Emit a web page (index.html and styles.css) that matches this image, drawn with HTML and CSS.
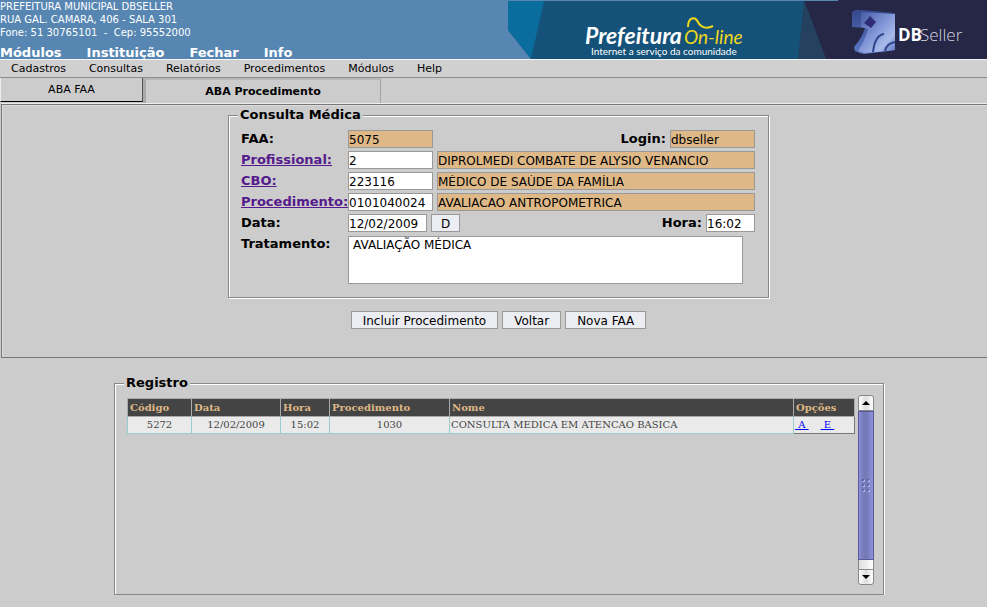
FILE: index.html
```html
<!DOCTYPE html>
<html lang="pt-BR">
<head>
<meta charset="utf-8">
<title>DBSeller - Prefeitura On-line</title>
<link rel="stylesheet" href="styles.css">
</head>
<body>
<header class="top">
  <div class="top-info">
    <p class="address">PREFEITURA MUNICIPAL DBSELLER<br>RUA GAL. CAMARA, 406 - SALA 301<br>Fone: 51 30765101 &nbsp;- &nbsp;Cep: 95552000</p>
    <nav class="main-nav">
      <a href="#">Módulos</a><a href="#">Instituição</a><a href="#">Fechar</a><a href="#">Info</a>
    </nav>
  </div>
  <svg class="banner" width="479" height="59" viewBox="0 0 479 59">
    <defs>
      <linearGradient id="cube" x1="0" y1="0" x2="1" y2="1">
        <stop offset="0" stop-color="#4257a4"/><stop offset=".5" stop-color="#8398d8"/><stop offset=".75" stop-color="#a9bbea"/><stop offset="1" stop-color="#5670bd"/>
      </linearGradient>
      <linearGradient id="side" x1="0" y1="0" x2="0" y2="1">
        <stop offset="0" stop-color="#35498c"/><stop offset="1" stop-color="#5b78c6"/>
      </linearGradient>
    </defs>
    <path d="M0 1H479V59H23L0 30Z" fill="#14527a"/>
    <path d="M0 1H36L23 59L0 30Z" fill="#0b6d9e"/>
    <path d="M296 1H330V0H479V59H318Z" fill="#262646"/>
    <path d="M296 1L318 59H290Z" fill="#25415f"/>
    <text class="brand" x="77" y="44">Prefeitura</text>
    <text class="online" x="176" y="44">On-line</text>
    <path d="M180 27C180 17 187 16 190 22C193 28 199 29 205 26" fill="none" stroke="#f0d81c" stroke-width="2"/>
    <text class="slogan" x="83" y="55">Internet a serviço da comunidade</text>
    <path d="M344 13Q344 11 348 10L354 10L387 13V50L380 51L356 54Q351 53 347 51L346 47Q354 38 357 28L344 27Z" fill="url(#side)"/>
    <path d="M353 12L387 14V50L380 51L356 53L350 51Q357 40 360 29L353 27Z" fill="url(#cube)"/>
    <path d="M362 16L368 22L363 28L356 23Z" fill="#302d78"/>
    <path d="M376 34C369 35 366 43 365 52M387 42C381 43 378 46 377 51" fill="none" stroke="#30448d" stroke-width="2"/>
    <text class="seller-bold" x="390" y="41">DB</text>
    <text class="seller" x="412" y="41">Seller</text>
  </svg>
</header>
<nav class="menu">
  <a href="#">Cadastros</a><a href="#">Consultas</a><a href="#">Relatórios</a><a href="#">Procedimentos</a><a href="#">Módulos</a><a href="#">Help</a>
</nav>
<div class="tabs">
  <button type="button" class="tab">ABA FAA</button>
  <button type="button" class="tab tab-active">ABA Procedimento</button>
</div>
<main>
  <form class="panel">
    <fieldset class="box consult">
      <legend>Consulta Médica</legend>
      <div class="grid">
        <label for="faa">FAA:</label>
        <div class="row">
          <input id="faa" class="code locked" value="5075" readonly>
          <span class="pair"><label for="login">Login:</label><input id="login" class="code locked" value="dbseller" readonly></span>
        </div>
        <label for="prof"><a href="#">Profissional:</a></label>
        <div class="row"><input id="prof" class="code" value="2"><input class="name locked" aria-label="Nome do profissional" value="DIPROLMEDI COMBATE DE ALYSIO VENANCIO" readonly></div>
        <label for="cbo"><a href="#">CBO:</a></label>
        <div class="row"><input id="cbo" class="code" value="223116"><input class="name locked" aria-label="Descrição do CBO" value="MÉDICO DE SAÚDE DA FAMÍLIA" readonly></div>
        <label for="proc"><a href="#">Procedimento:</a></label>
        <div class="row"><input id="proc" class="code" value="0101040024"><input class="name locked" aria-label="Descrição do procedimento" value="AVALIACAO ANTROPOMETRICA" readonly></div>
        <label for="data">Data:</label>
        <div class="row">
          <input id="data" class="date" value="12/02/2009"><button type="button" class="btn">D</button>
          <span class="pair"><label for="hora">Hora:</label><input id="hora" class="hour" value="16:02"></span>
        </div>
        <label for="trat">Tratamento:</label>
        <textarea id="trat">AVALIAÇÃO MÉDICA</textarea>
      </div>
    </fieldset>
    <div class="actions">
      <button type="button" class="btn">Incluir Procedimento</button>
      <button type="button" class="btn">Voltar</button>
      <button type="button" class="btn">Nova FAA</button>
    </div>
  </form>
  <section class="records">
    <fieldset class="box registry">
      <legend>Registro</legend>
      <div class="list">
        <table>
          <colgroup><col class="c-code"><col class="c-date"><col class="c-hour"><col class="c-proc"><col><col class="c-opt"></colgroup>
          <thead><tr><th>Código</th><th>Data</th><th>Hora</th><th>Procedimento</th><th>Nome</th><th>Opções</th></tr></thead>
          <tbody><tr><td>5272</td><td>12/02/2009</td><td>15:02</td><td>1030</td><td class="left">CONSULTA MEDICA EM ATENCAO BASICA</td><td class="options"><a href="#">&nbsp;A&nbsp;</a><a href="#">&nbsp;E&nbsp;</a></td></tr></tbody>
        </table>
        <div class="scroll">
          <button type="button" class="arrow" aria-label="Subir"><svg width="8" height="4" viewBox="0 0 8 4"><path d="M0 4L4 0L8 4Z"/></svg></button>
          <div class="track"><div class="thumb"><i></i><i></i><i></i><i></i><i></i><i></i></div></div>
          <button type="button" class="arrow arrow-down" aria-label="Descer"><svg width="8" height="4" viewBox="0 0 8 4"><path d="M0 0H8L4 4Z"/></svg></button>
        </div>
      </div>
    </fieldset>
  </section>
</main>
</body>
</html>
```

FILE: styles.css
```css
* { box-sizing: border-box; }
body {
  margin: 0;
  background: #ccc;
  color: #000;
  font: 12px/16px "DejaVu Sans", sans-serif;
  overflow: hidden;
}
button, input, textarea { font: inherit; color: inherit; border-radius: 0; }

.top {
  display: flex;
  justify-content: space-between;
  height: 59px;
  background: #5786b2;
  color: #fff;
}
.banner { flex: none; }
.top-info { display: flex; flex-direction: column; }
.address { margin: 0; font-size: 10px; line-height: 13px; white-space: nowrap; }
.main-nav { display: flex; gap: 25px; margin-top: 5px; font-size: 13px; font-weight: bold; line-height: 17px; }
.main-nav a { color: #fff; text-decoration: none; }
.brand { font: italic bold 23px Lato, sans-serif; fill: #fff; }
.online { font: italic 19px Lato, sans-serif; fill: #f0d81c; }
.slogan { font: 10px Lato, sans-serif; fill: #fff; }
.seller-bold { font: bold 17px "Open Sans", sans-serif; fill: #fff; }
.seller { font: 300 17px "Open Sans", sans-serif; fill: #d4d4e0; }

.menu {
  display: flex;
  gap: 23px;
  height: 19px;
  padding-left: 11px;
  border-top: 1px solid #f4f4f4;
  border-bottom: 1px solid #8c8c8c;
  background: #d0d0d0;
  font-size: 11px;
  line-height: 17px;
}
.menu a { color: #000; text-decoration: none; }

.tabs { display: flex; height: 26px; font-size: 11px; }
.tab {
  width: 143px;
  height: 24px;
  padding: 0;
  border: 1px solid #eee;
  border-top: 0;
  border-right: 1px solid #555;
  border-bottom: 1px solid #000;
  background: #ccc;
}
.tab-active {
  width: 238px;
  height: 25px;
  border: 0;
  border-top: 2px solid #b8b8b8;
  border-left: 3px solid #aaa;
  border-right: 1px solid #a4a4a4;
  font-weight: bold;
}

.panel {
  height: 254px;
  margin-left: 1px;
  padding: 2px 0 0 8px;
  border: 1px solid #777;
  border-right: 0;
  box-shadow: 0 -1px #eee, inset 1px 1px #ddd;
}
.box {
  min-width: 0;
  margin: 0 auto;
  border: 1px solid #888;
  box-shadow: 1px 1px #fff, inset 1px 1px #fff;
}
.box legend { padding: 0 2px; background: #ccc; font-size: 13px; font-weight: bold; line-height: 16px; }
.consult { width: 541px; padding: 7px 13px 13px 12px; }
.consult legend, .registry legend { margin-left: -3px; }
.grid { display: grid; grid-template-columns: 107px 1fr; row-gap: 3px; }
.grid label { font-size: 13px; font-weight: bold; line-height: 18px; }
.grid a { color: #551a8b; }
.row { display: flex; gap: 4px; height: 18px; }
.pair { display: flex; gap: 4px; margin-left: auto; }
.grid input {
  min-width: 0;
  height: 18px;
  padding: 1px 0 0;
  border: 1px solid #999;
  background: #fff;
}
.grid .locked { background: #deb887; }
.grid .code { width: 85px; }
.grid .name { flex: 1; }
.grid .date { width: 79px; }
.grid .hour { width: 49px; }
.grid textarea {
  width: 395px;
  height: 48px;
  margin-top: 1px;
  padding: 0 4px;
  border: 1px solid #999;
  resize: none;
  overflow: hidden;
}
.btn { height: 18px; padding: 1px 11px 0; border: 1px solid #999; background: #ecedf2; line-height: 16px; }
.row .btn { padding: 1px 9px 0; }
.actions { display: flex; justify-content: center; gap: 4px; margin-top: 13px; }

.records { padding: 17px 0 0 11px; }
.registry { width: 770px; height: 220px; padding: 7px 9px 10px 12px; }
.list { display: flex; gap: 3px; align-items: flex-start; }
table {
  flex: 1;
  min-width: 0;
  border-collapse: collapse;
  table-layout: fixed;
  border: 1px solid #eee;
  border-right-color: #777;
  border-bottom-color: #777;
  font: 10px/14px "DejaVu Serif", serif;
}
th { height: 18px; padding: 0 2px; border: 1px solid #aaa; background: #444; color: #deb887; text-align: left; }
td { height: 17px; padding: 0 1px; border: 1px solid #9cc; background: #eaeaea; color: #444; text-align: center; }
.left { text-align: left; }
.options { border-color: #777; text-align: left; }
.options a { margin-right: 12px; color: #00f; }
.c-code { width: 64px; }
.c-date { width: 89px; }
.c-hour { width: 49px; }
.c-proc { width: 120px; }
.c-opt { width: 61px; }

.scroll { display: flex; flex-direction: column; width: 16px; height: 190px; margin-top: -3px; }
.arrow {
  display: flex;
  align-items: center;
  justify-content: center;
  height: 16px;
  padding: 0;
  border: 1px solid #888;
  border-radius: 3px 3px 0 0;
  background: linear-gradient(90deg, #fff, #ddd, #fff);
}
.arrow-down { border-radius: 0 0 3px 3px; }
.track { flex: 1; border: 1px solid #888; border-width: 0 1px; background: linear-gradient(90deg, #ddd, #fff); }
.thumb {
  display: grid;
  grid-template-columns: 3px 3px;
  gap: 2px;
  place-content: center;
  height: 149px;
  margin: 0 -1px;
  border: 1px solid #5a5a96;
  background: linear-gradient(90deg, #9090e0, #7c80c0 20%, #7278b4 50%, #8388cc 80%, #9090e0);
}
.thumb i { width: 3px; height: 3px; border: 1px solid #5a5f9d; border-right-color: #b0b4f0; border-bottom-color: #b0b4f0; }
```
